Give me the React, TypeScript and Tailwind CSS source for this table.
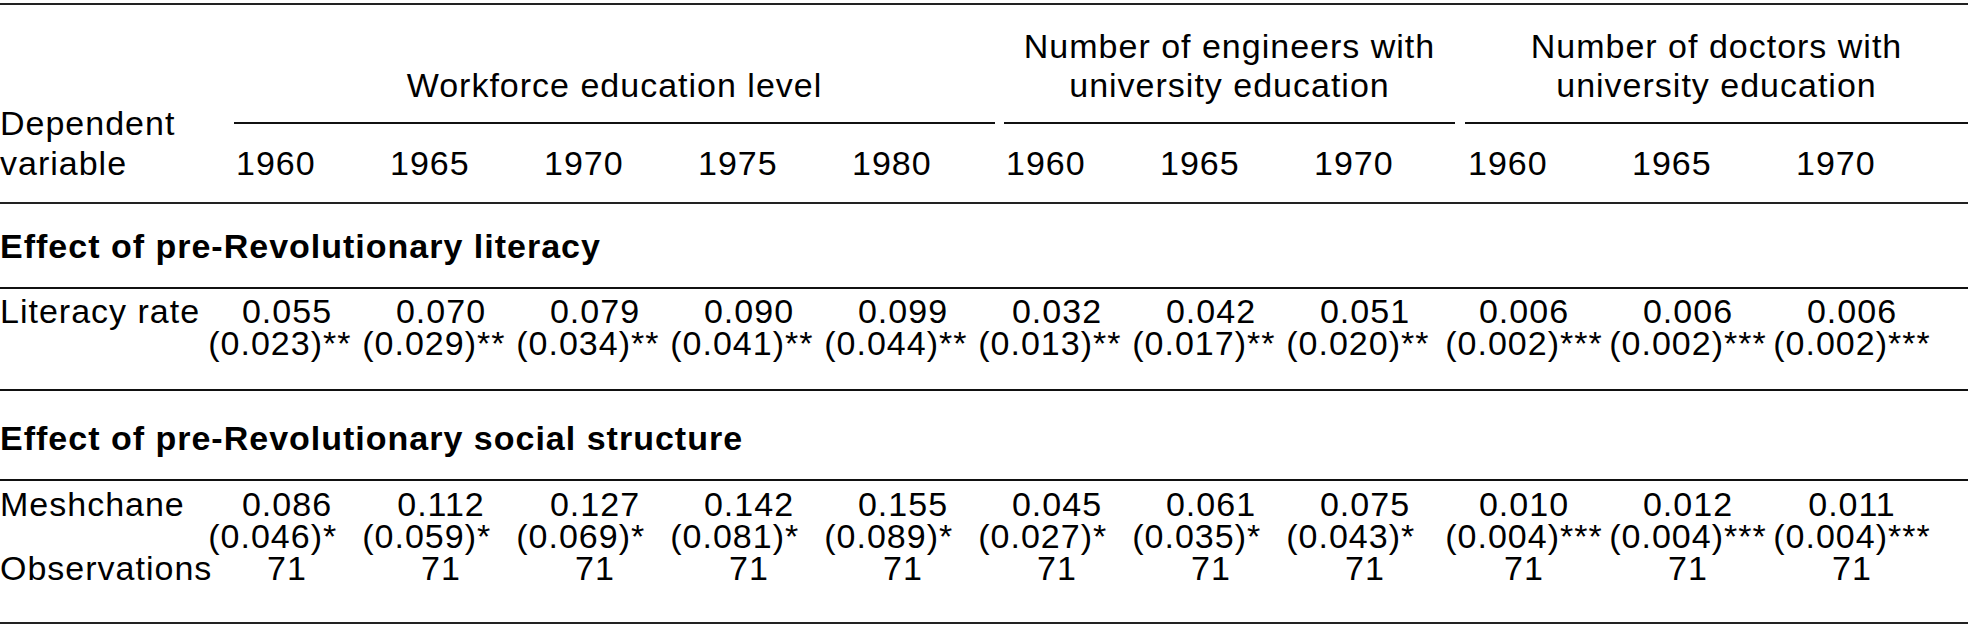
const years = ['1960', '1965', '1970', '1975', '1980', '1960', '1965', '1970', '1960', '1965', '1970'];

const literacyCoef = ['0.055', '0.070', '0.079', '0.090', '0.099', '0.032', '0.042', '0.051', '0.006', '0.006', '0.006'];
const literacySe: [string, string][] = [
  ['0.023', '**'], ['0.029', '**'], ['0.034', '**'], ['0.041', '**'], ['0.044', '**'],
  ['0.013', '**'], ['0.017', '**'], ['0.020', '**'],
  ['0.002', '***'], ['0.002', '***'], ['0.002', '***'],
];

const meshCoef = ['0.086', '0.112', '0.127', '0.142', '0.155', '0.045', '0.061', '0.075', '0.010', '0.012', '0.011'];
const meshSe: [string, string][] = [
  ['0.046', '*'], ['0.059', '*'], ['0.069', '*'], ['0.081', '*'], ['0.089', '*'],
  ['0.027', '*'], ['0.035', '*'], ['0.043', '*'],
  ['0.004', '***'], ['0.004', '***'], ['0.004', '***'],
];
const obs = Array(11).fill('71');

// workforce + engineers columns share a width, the doctors block is wider
const colClass = (i: number) => (i < 8 ? 'w-[154px]' : 'w-[164px]');

// standard error with stars; missing stars are kept as invisible padding
// so every SE line has the same width and the coefficients stay centred over it
function Se({ value, stars }: { value: string; stars: string }) {
  return (
    <div>
      ({value}){stars}
      <span className="invisible">{'***'.slice(stars.length)}</span>
    </div>
  );
}

function Cell({ children }: { children: React.ReactNode }) {
  return <div className="flex flex-col items-center">{children}</div>;
}

function Row({ label, children }: { label: string; children: (i: number) => React.ReactNode }) {
  return (
    <div className="flex">
      <div className="w-[210px] shrink-0">{label}</div>
      {years.map((_, i) => (
        <div key={i} className={`${colClass(i)} shrink-0`}>
          {children(i)}
        </div>
      ))}
    </div>
  );
}

export default function App() {
  return (
    <div className="w-[1968px] h-[631px] bg-white text-black font-['Liberation_Sans',Arial,sans-serif] text-[34px] tracking-[1px] whitespace-nowrap">
      <div className="pt-[3px]">
        <div className="border-t-2 border-[#222]" />

        {/* header */}
        <div className="flex border-b-2 border-[#222]">
          <div className="w-[210px] shrink-0 flex flex-col justify-end pb-[19px] leading-[40px]">
            <div>Dependent</div>
            <div>variable</div>
          </div>
          <div className="flex-1 flex flex-col">
            <div className="flex pt-[22px] leading-[39px]">
              <div className="w-[24px] shrink-0" />
              <div className="w-[761px] shrink-0 flex flex-col justify-end items-center pb-[17px] border-b-2 border-[#111]">
                <div>Workforce education level</div>
              </div>
              <div className="w-[9px] shrink-0" />
              <div className="w-[451px] shrink-0 flex flex-col items-center pb-[17px] border-b-2 border-[#111]">
                <div>Number of engineers with</div>
                <div>university education</div>
              </div>
              <div className="w-[10px] shrink-0" />
              <div className="flex-1 flex flex-col items-center pb-[17px] border-b-2 border-[#111]">
                <div>Number of doctors with</div>
                <div>university education</div>
              </div>
            </div>
            <div className="flex pt-[19px] pb-[19px] leading-[40px]">
              {years.map((y, i) => (
                <div key={i} className={`${colClass(i)} shrink-0 pl-[26px]`}>
                  {y}
                </div>
              ))}
            </div>
          </div>
        </div>

        <div className="pt-[21px] pb-[20px] leading-[42px] font-bold border-b-2 border-[#111]">
          Effect of pre-Revolutionary literacy
        </div>

        <div className="pt-[6px] pb-[30px] leading-[32px] border-b-2 border-[#111]">
          <Row label="Literacy rate">
            {(i) => (
              <Cell>
                <div>{literacyCoef[i]}</div>
                <Se value={literacySe[i][0]} stars={literacySe[i][1]} />
              </Cell>
            )}
          </Row>
        </div>

        <div className="pt-[26px] pb-[20px] leading-[42px] font-bold border-b-2 border-[#111]">
          Effect of pre-Revolutionary social structure
        </div>

        <div className="pt-[7px] pb-[38px] leading-[32px] border-b-2 border-[#222]">
          <Row label="Meshchane">
            {(i) => (
              <Cell>
                <div>{meshCoef[i]}</div>
                <Se value={meshSe[i][0]} stars={meshSe[i][1]} />
              </Cell>
            )}
          </Row>
          <Row label="Observations">{(i) => <Cell>{obs[i]}</Cell>}</Row>
        </div>
      </div>
    </div>
  );
}
